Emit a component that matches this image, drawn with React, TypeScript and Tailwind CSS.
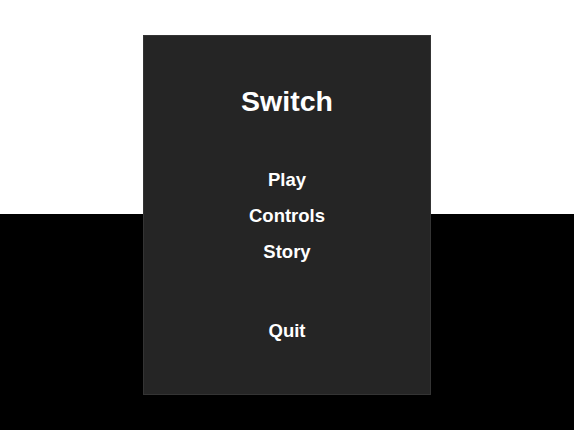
import React from 'react'

const items = ['Play', 'Controls', 'Story']

const App = () => {
    return (
        <div
            className="w-[574px] h-[430px] overflow-hidden bg-[linear-gradient(to_bottom,#ffffff_214px,#000000_214px)] pt-[35px]"
            style={{ fontFamily: '"Liberation Sans", Arial, sans-serif' }}
        >
            <div className="mx-auto w-[288px] h-[360px] bg-[#252525] border border-[#343434] flex flex-col items-center text-white font-bold pt-[49px]">
                <h1 className="text-[28.5px] leading-[32px]">Switch</h1>
                <div className="mt-[45px] flex flex-col items-center">
                    {items.map((item) => (
                        <span key={item} className="text-[18.5px] leading-[36px]">{item}</span>
                    ))}
                </div>
                <span className="mt-[43px] text-[18.5px] leading-[36px]">Quit</span>
            </div>
        </div>
    )
}

export default App
